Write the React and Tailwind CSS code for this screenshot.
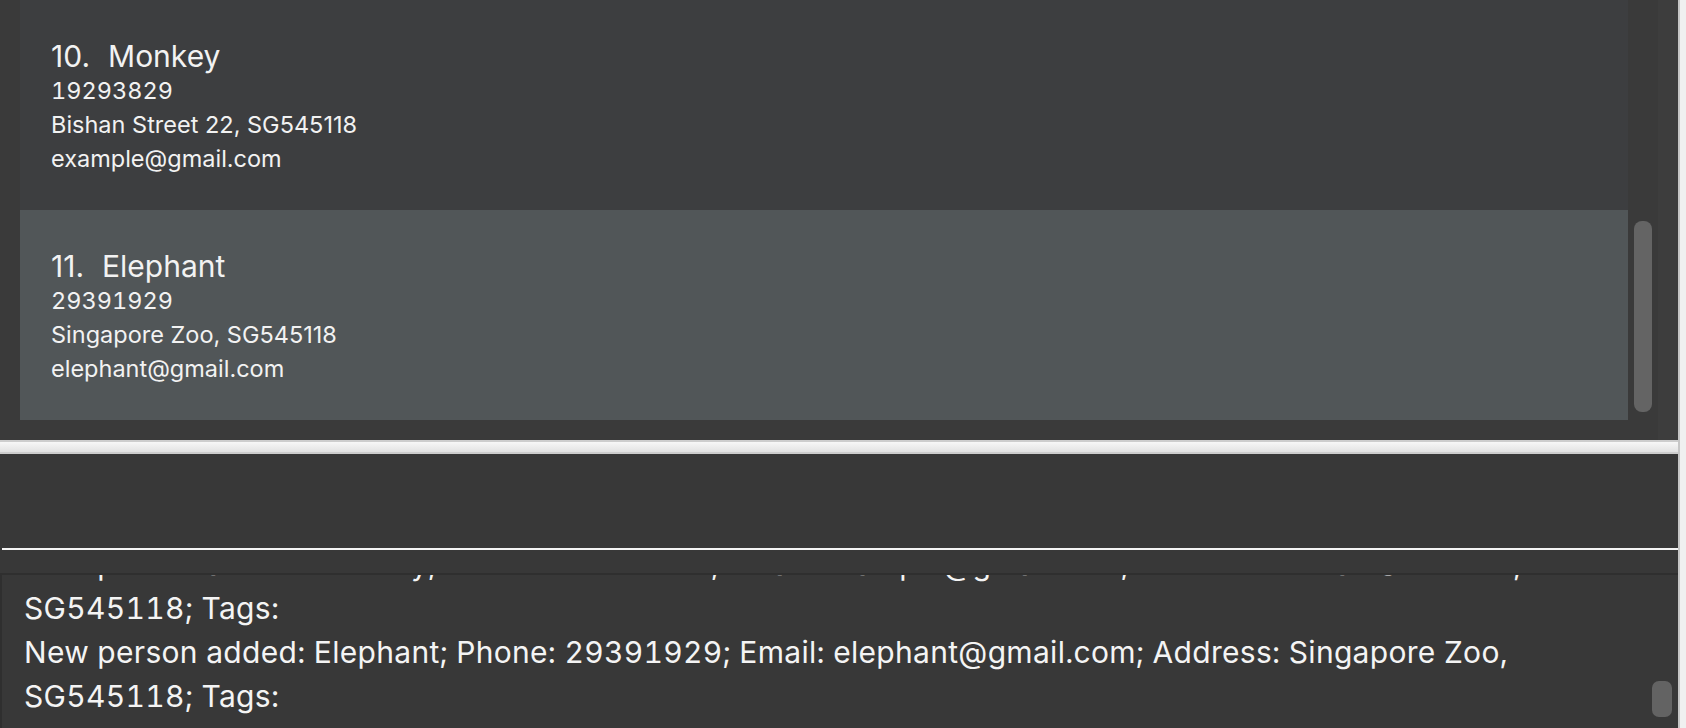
import React from "react";

const people = [
  {
    id: 10,
    name: "Monkey",
    phone: "19293829",
    address: "Bishan Street 22, SG545118",
    email: "example@gmail.com",
    selected: false,
  },
  {
    id: 11,
    name: "Elephant",
    phone: "29391929",
    address: "Singapore Zoo, SG545118",
    email: "elephant@gmail.com",
    selected: true,
  },
];

const resultLines = [
  "New person added: Monkey; Phone: 19293829; Email: example@gmail.com; Address: Bishan Street 22,",
  "SG545118; Tags:",
  "New person added: Elephant; Phone: 29391929; Email: elephant@gmail.com; Address: Singapore Zoo,",
  "SG545118; Tags:",
];

function PersonCard({ person }) {
  return (
    <div
      className={
        person.selected
          ? "h-[210px] bg-[#515658] pl-[31px] pt-[38px] text-[#f2f2f2]"
          : "h-[210px] bg-[#3d3e40] pl-[31px] pt-[38px] text-[#f2f2f2]"
      }
    >
      <div className="flex items-baseline text-[30px] leading-[36px]">
        <span>{person.id}.</span>
        <span className="ml-[18px]">{person.name}</span>
      </div>
      <div className="text-[23.5px] leading-[34px] tabular-nums">{person.phone}</div>
      <div className="text-[23.5px] leading-[34px]">{person.address}</div>
      <div className="text-[23.5px] leading-[34px]">{person.email}</div>
    </div>
  );
}

export default function App() {
  return (
    <div className="w-[1686px] h-[728px] overflow-hidden bg-[#383838] flex font-['Inter',sans-serif]">
      <div className="flex-1 flex flex-col">
        {/* person list */}
        <div className="h-[440px] flex bg-[#3a3a3a]">
          <div className="w-[20px]" />
          <div className="w-[1608px] flex flex-col">
            {people.map((p) => (
              <PersonCard key={p.id} person={p} />
            ))}
          </div>
          <div className="w-[30px] h-[420px] bg-[#3a3a3a] pt-[221px] px-[6px]">
            <div className="h-[191px] rounded-[8px] bg-[#646464]" />
          </div>
          <div className="flex-1 bg-[#3d3d3d]" />
        </div>

        {/* split divider */}
        <div className="h-[14px] border-y-2 border-[#cdcdcd] bg-gradient-to-b from-[#f7f7f7] to-[#e2e2e2]" />

        {/* command box */}
        <div className="h-[94px]" />
        <div className="ml-[2px] h-[2px] bg-[#f4f4f4]" />
        <div className="h-[23px]" />

        {/* result display */}
        <div className="h-[155px] border-t-2 border-l-2 border-[#2f2f2f] flex overflow-hidden">
          <div className="flex-1 h-full overflow-hidden pl-[22px] text-[30px] leading-[44px] tracking-[0.3px] text-[#f4f4f4] tabular-nums">
            <div className="-mt-[33px]">
              {resultLines.map((l, i) => (
                <div key={i} className="whitespace-nowrap">
                  {l}
                </div>
              ))}
            </div>
          </div>
          <div className="w-[30px] pt-[106px] pl-[4px] pr-[6px]">
            <div className="h-[36px] rounded-[7px] bg-[#636363]" />
          </div>
        </div>
      </div>

      {/* right window edge */}
      <div className="w-[8px] border-l-2 border-[#c6c6c6] bg-[#f0f0f0]" />
    </div>
  );
}
